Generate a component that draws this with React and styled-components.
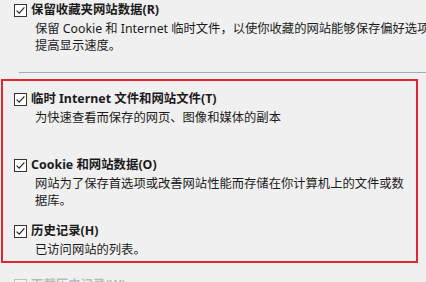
import React from 'react'
import styled, { createGlobalStyle } from 'styled-components'

const GlobalStyle = createGlobalStyle`
  html, body {
    margin: 0;
    padding: 0;
    background: #f0f0f0;
    overflow: hidden;
  }
`

const items = [
  {
    title: '临时 Internet 文件和网站文件(T)',
    lines: ['为快速查看而保存的网页、图像和媒体的副本'],
  },
  {
    title: 'Cookie 和网站数据(O)',
    lines: ['网站为了保存首选项或改善网站性能而存储在你计算机上的文件或数', '据库。'],
  },
  {
    title: '历史记录(H)',
    lines: ['已访问网站的列表。'],
  },
]

function CheckBox() {
  return (
    <svg width='13' height='13' viewBox='0 0 13 13'>
      <rect x='0.5' y='0.5' width='12' height='12' fill='#ffffff' stroke='#333333' />
      <path d='M2.6 6.6 L5.2 9.2 L10.4 3.4' fill='none' stroke='#222222' strokeWidth='1.2' />
    </svg>
  )
}

function Option({ title, lines, faded }) {
  return (
    <Item $faded={faded}>
      <TitleRow>
        <CheckBox />
        <Title>{title}</Title>
      </TitleRow>
      <Desc>
        {lines.map((l) => (
          <DescLine key={l}>{l}</DescLine>
        ))}
      </Desc>
    </Item>
  )
}

function App() {
  return (
    <Page>
      <GlobalStyle />
      <Option
        title='保留收藏夹网站数据(R)'
        lines={['保留 Cookie 和 Internet 临时文件，以使你收藏的网站能够保存偏好选项并', '提高显示速度。']}
      />
      <Divider />
      <Highlight>
        {items.map((it) => (
          <Option key={it.title} title={it.title} lines={it.lines} />
        ))}
      </Highlight>
      <Option faded title='下载历史记录(W)' lines={['你已下载的文件的列表。']} />
    </Page>
  )
}

const Page = styled.div`
  width: 426px;
  height: 282px;
  overflow: hidden;
  padding-top: 1px;
  box-sizing: border-box;
  font-family: 'Noto Sans', 'Noto Sans CJK SC', sans-serif;
  color: #1b1b1b;
`

const Item = styled.div`
  display: flex;
  flex-direction: column;
  padding-left: 14px;
  margin-top: ${(p) => (p.$faded ? '13px' : '0')};
  opacity: ${(p) => (p.$faded ? 0.25 : 1)};
`

const TitleRow = styled.div`
  display: flex;
  align-items: center;
  gap: 4px;
  height: 18px;
`

const Title = styled.span`
  font-size: 12.4px;
  font-weight: 700;
  line-height: 18px;
  white-space: nowrap;
`

const Desc = styled.div`
  margin-top: 1px;
  padding-left: 21px;
  min-height: 34px;
  margin-bottom: 13px;
`

const DescLine = styled.div`
  font-size: 12.3px;
  line-height: 17px;
  white-space: nowrap;
`

const Divider = styled.div`
  margin: 5px 0 6px 19px;
  border-top: 1px solid #a3acb6;
`

const Highlight = styled.div`
  margin-left: 1px;
  width: 417px;
  height: 184px;
  box-sizing: border-box;
  border: 2px solid #e0282e;
  padding-top: 9px;
  padding-left: 11px;
  overflow: hidden;

  & > div {
    padding-left: 0;
  }
`

export default App
